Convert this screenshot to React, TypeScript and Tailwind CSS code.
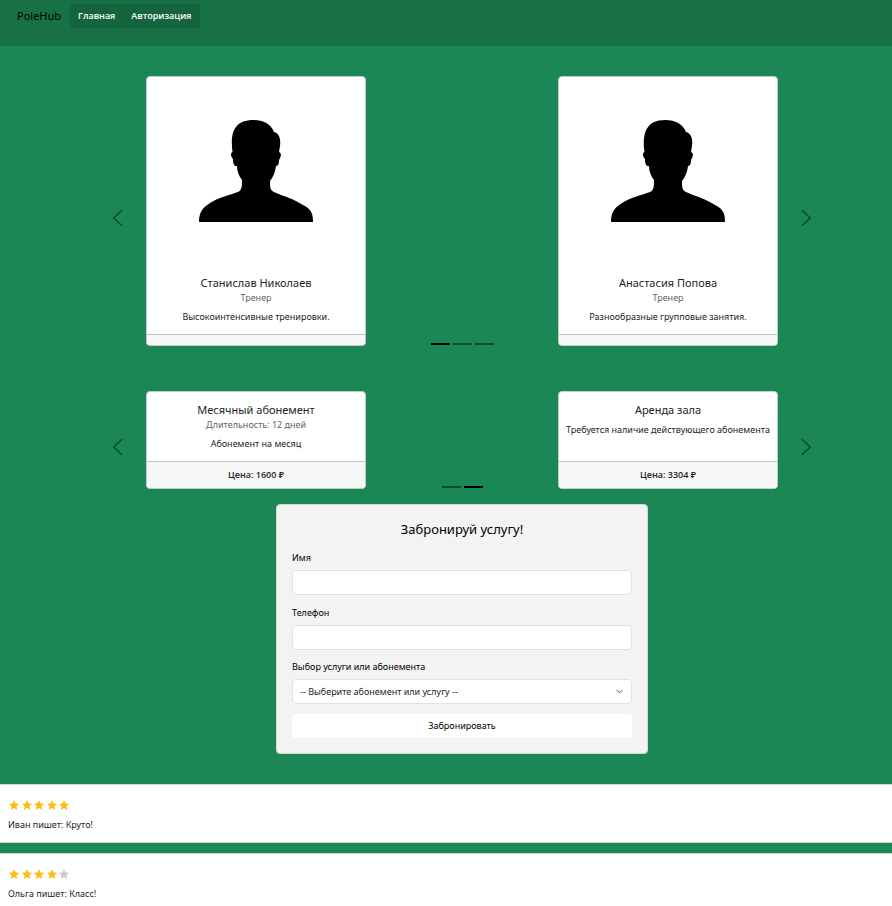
import { useState } from "react";

type Item = { title: string; subtitle?: string; text: string; price?: string; photo?: boolean };

const trainers: Item[] = [
  { title: "Станислав Николаев", subtitle: "Тренер", text: "Высокоинтенсивные тренировки.", photo: true },
  { title: "Анастасия Попова", subtitle: "Тренер", text: "Разнообразные групповые занятия.", photo: true },
];

const services: Item[] = [
  { title: "Месячный абонемент", subtitle: "Длительность: 12 дней", text: "Абонемент на месяц", price: "Цена: 1600 ₽" },
  { title: "Аренда зала", text: "Требуется наличие действующего абонемента", price: "Цена: 3304 ₽" },
];

const reviews = [
  { text: "Иван пишет: Круто!", rating: 5 },
  { text: "Ольга пишет: Класс!", rating: 4 },
];

function Silhouette() {
  return (
    <svg viewBox="0 0 114 102" className="h-[102px] w-[114px]" aria-hidden="true">
      <path d="M0 102C0 93 3 88 11 83C20 77 31 75 39 72C43 70 43 66 43 60C40 56 38 52 38 46C35 47 34 43 34 39C32 37 31 33 33.500 32C31 13 35 0 54.500 0C64 0 72 4 75 12C80 13 82 19 81 26L80 32C83 33 82 37 80 40C80 44 79 46 77 46C76 53 74 57 71 61C71 67 71 70 75 72C84 76 95 79 104 85C112 89 114 93 114 102Z" />
    </svg>
  );
}

function ItemCard({ item }: { item: Item }) {
  return (
    <article className="flex w-[220px] flex-col overflow-hidden rounded border border-[#c5cdc8] bg-white text-center text-[#212529]">
      {item.photo && (
        <div className="flex h-[188px] items-center justify-center">
          <Silhouette />
        </div>
      )}
      <div className="h-[69px] pt-2">
        <h5 className="text-[11px] leading-[19px]">{item.title}</h5>
        {item.subtitle && <h6 className="mb-1.5 text-[9px] leading-3 text-[#5f6469]">{item.subtitle}</h6>}
        <p className={item.subtitle ? "leading-[14px]" : "mt-1 leading-[14px]"}>{item.text}</p>
      </div>
      <footer className={`border-t border-[#c4c4c5] bg-[#f7f7f8] font-['Open_Sans','Noto_Sans',sans-serif] font-semibold ${item.price ? "py-1.5 leading-[14px]" : "h-[11px]"}`}>
        {item.price}
      </footer>
    </article>
  );
}

function Arrow({ next }: { next?: boolean }) {
  return (
    <svg viewBox="0 0 16 16" className="size-5" fill="none" stroke="currentColor" strokeWidth="1" strokeLinecap="round" strokeLinejoin="round" aria-hidden="true">
      <path d={next ? "M5 2L11.500 8L5 14" : "M11 2L4.500 8L11 14"} />
    </svg>
  );
}

function Carousel({ items, count, initial, name }: { items: Item[]; count: number; initial: number; name: string }) {
  const [active, setActive] = useState(initial);
  return (
    <section aria-label={name} className="mx-auto grid w-full max-w-[708px] grid-cols-[38px_1fr_38px]">
      <button type="button" aria-label="Назад" onClick={() => setActive((active + count - 1) % count)} className="flex items-center justify-start pt-3.5 text-[#0b4327]">
        <Arrow />
      </button>
      <div className="grid grid-cols-[auto_1fr_auto]">
        <ItemCard item={items[0]} />
        <div className="flex items-end justify-center gap-[3px] pb-px">
          {Array.from({ length: count }, (_, i) => (
            <button
              key={i}
              type="button"
              aria-label={`Слайд ${i + 1}`}
              onClick={() => setActive(i)}
              className={`h-0.5 w-[19px] ${i === active ? "bg-black" : "bg-[#0c4a2b]"}`}
            />
          ))}
        </div>
        <ItemCard item={items[1]} />
      </div>
      <button type="button" aria-label="Вперёд" onClick={() => setActive((active + 1) % count)} className="flex items-center justify-end pt-3.5 text-[#0b4327]">
        <Arrow next />
      </button>
    </section>
  );
}

function Star({ filled }: { filled: boolean }) {
  return (
    <svg viewBox="0 0 24 24" className={`size-3 ${filled ? "fill-[#fcbc12]" : "fill-[#cacaca]"}`} aria-hidden="true">
      <path d="M12 2L15 8.800L22.300 9.600L16.800 14.500L18.400 22L12 18.200L5.600 22L7.200 14.500L1.700 9.600L9 8.800Z" />
    </svg>
  );
}

export default function App() {
  return (
    <div className="min-h-screen bg-[#1a8754] font-['Noto_Sans','Open_Sans',sans-serif] text-[9px] leading-[14px] text-black">
      <header className="flex h-[46px] items-start bg-[#177145] px-4 pt-1">
        <a href="#" className="mr-2 px-px text-[11px] leading-6">PoleHub</a>
        <nav className="flex rounded bg-[#14643e] font-['Open_Sans','Noto_Sans',sans-serif] font-semibold text-white">
          <a href="#" className="rounded px-2 leading-6">Главная</a>
          <a href="#" className="rounded px-2 leading-6">Авторизация</a>
        </nav>
      </header>

      <main className="pt-[30px] pl-8">
        <Carousel items={trainers} count={3} initial={0} name="Тренеры" />
        <div className="h-[45px]" />
        <Carousel items={services} count={2} initial={1} name="Услуги" />

        <form onSubmit={(e) => e.preventDefault()} className="mx-auto mt-[15px] flex max-w-[372px] flex-col rounded border border-[#d3d9d6] bg-[#f3f3f3] px-[15px] pt-3.5 pb-[15px]">
          <h4 className="mb-3 text-center text-[13px] leading-5">Забронируй услугу!</h4>
          <label htmlFor="name" className="mb-[5px]">Имя</label>
          <input id="name" type="text" className="mb-[11px] h-[25px] rounded border border-[#dee2e6] bg-white px-2" />
          <label htmlFor="phone" className="mb-[5px]">Телефон</label>
          <input id="phone" type="tel" className="mb-2.5 h-[25px] rounded border border-[#dee2e6] bg-white px-2" />
          <label htmlFor="service" className="mb-[5px]">Выбор услуги или абонемента</label>
          <div className="mb-2.5 grid items-center">
            <select id="service" className="col-start-1 row-start-1 h-[25px] w-full appearance-none rounded border border-[#dee2e6] bg-white px-[7px] text-[#212529]">
              <option>-- Выберите абонемент или услугу --</option>
              <option>Месячный абонемент</option>
              <option>Аренда зала</option>
            </select>
            <svg viewBox="0 0 16 16" className="pointer-events-none col-start-1 row-start-1 mr-[9px] size-[7px] justify-self-end" fill="none" stroke="#343a40" strokeWidth="2" strokeLinecap="round" strokeLinejoin="round" aria-hidden="true">
              <path d="M2 5L8 11L14 5" />
            </svg>
          </div>
          <button type="submit" className="h-6 rounded bg-white">Забронировать</button>
        </form>
      </main>

      <section aria-label="Отзывы" className="mt-[30px] flex flex-col gap-2.5">
        {reviews.map((r) => (
          <article key={r.text} className="h-[59px] border-y border-[#bfdccd] bg-white px-2 pt-3.5 text-[#212529]">
            <div role="img" aria-label={`Оценка: ${r.rating} из 5`} className="mb-[7px] flex w-[62px] justify-between">
              {[1, 2, 3, 4, 5].map((n) => (
                <Star key={n} filled={n <= r.rating} />
              ))}
            </div>
            <p>{r.text}</p>
          </article>
        ))}
      </section>
    </div>
  );
}
